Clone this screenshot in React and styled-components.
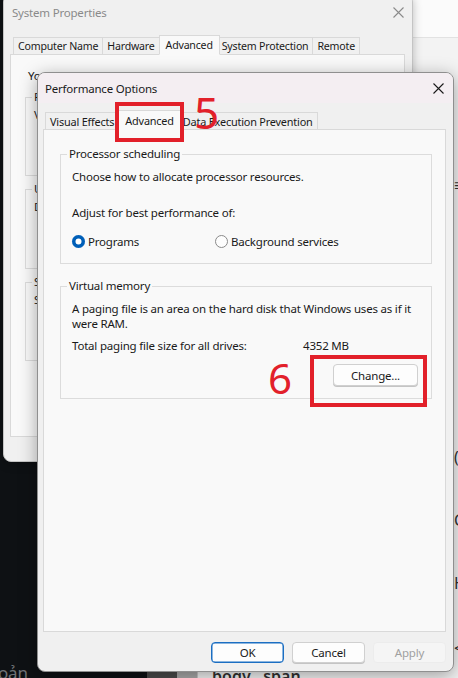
import React from 'react';
import styled, { createGlobalStyle } from 'styled-components';

const FONT = `"Noto Sans", "Segoe UI", Arial, sans-serif`;

const Global = createGlobalStyle`
  html, body { margin: 0; padding: 0; }
  body {
    width: 458px; height: 678px; overflow: hidden;
    background: #0e1114;
    font-family: ${FONT};
    font-size: 11.5px;
    letter-spacing: -0.2px;
    color: #1a1a1a;
  }
  * { box-sizing: border-box; }
`;

const Desktop = styled.div`
  position: relative;
  width: 458px;
  height: 678px;
  overflow: hidden;
  background: #0e1114;
`;

/* ---------- background application (behind windows) ---------- */
const BackApp = styled.div`
  position: absolute;
  left: 197px; top: 0; right: 0; bottom: 0;
  display: flex;
  flex-direction: column;
  background: #f3f3f3;
  border-left: 1px solid #c9c9c9;
`;
const BackHeader = styled.div`
  height: 38px;
  background: #fbfbfb;
  border-bottom: 1px solid #e2e2e2;
`;
const BackBody = styled.div`
  flex: 1;
  display: flex;
  justify-content: space-between;
`;
const BackFoot = styled.div`
  align-self: flex-end;
  margin: 0 0 -9px 14px;
  font: 600 16px ${FONT};
  letter-spacing: 0;
  color: #333;
`;
const BackGlyphs = styled.div`
  display: flex;
  flex-direction: column;
  padding-top: 136px;
  margin-right: -7px;
  font: 16px/22px ${FONT};
  color: #333;
  width: 11px;
`;
const Glyph = styled.span`
  margin-top: ${p => p.$mt}px;
`;
const TaskStub = styled.div`
  position: absolute;
  left: 147px; bottom: 0;
  width: 50px; height: 6px;
  display: flex;
`;
const StubPart = styled.div`
  flex: ${p => p.$w};
  background: ${p => p.$c};
`;
const CornerText = styled.div`
  position: absolute;
  left: -2px; bottom: -6px;
  font: 17px ${FONT};
  color: #6e7276;
`;

/* ---------- generic window pieces ---------- */
const Win = styled.div`
  position: absolute;
  display: flex;
  flex-direction: column;
  background: #f0f0f0;
  border: 1px solid ${p => (p.$active ? '#8f8f8f' : '#c4c4c4')};
  border-radius: 8px;
  box-shadow: ${p => (p.$active ? '0 4px 18px rgba(0,0,0,0.35)' : '0 2px 10px rgba(0,0,0,0.25)')};
  overflow: hidden;
`;
const TitleBar = styled.div`
  display: flex;
  align-items: center;
  justify-content: space-between;
  height: ${p => p.$h}px;
  padding: 0 ${p => p.$pr}px 0 ${p => p.$pl}px;
  background: ${p => (p.$active ? '#f4eef2' : '#f0f0f0')};
  color: ${p => (p.$active ? '#1a1a1a' : '#8a8a8a')};
  flex-shrink: 0;
`;
const CloseIcon = ({ color }) => (
  <svg width="11" height="11" viewBox="0 0 11 11">
    <path d="M0.5 0.5 L10.5 10.5 M10.5 0.5 L0.5 10.5" stroke={color} strokeWidth="1.1" fill="none" />
  </svg>
);

const WinBody = styled.div`
  flex: 1;
  display: flex;
  flex-direction: column;
  padding: ${p => p.$pad};
`;
const TabRow = styled.div`
  display: flex;
  align-items: flex-end;
  padding-left: ${p => p.$pl}px;
  height: 20px;
  flex-shrink: 0;
  font-size: ${p => p.$fs}px;
`;
const Tab = styled.div`
  height: ${p => (p.$sel ? 20 : 18)}px;
  padding: 0 ${p => (p.$sel ? 6 : 4)}px;
  margin: 0 ${p => (p.$sel ? -2 : 0)}px -1px;
  display: flex;
  align-items: center;
  border: 1px solid #d9d9d9;
  border-bottom: ${p => (p.$sel ? '1px solid #f9f9f9' : '1px solid #d9d9d9')};
  background: ${p => (p.$sel ? '#f9f9f9' : '#f0f0f0')};
  position: relative;
  z-index: ${p => (p.$sel ? 2 : 1)};
  white-space: nowrap;
  & + & { margin-left: ${p => (p.$sel ? -1 : 2)}px; }
`;
const TabPanel = styled.div`
  flex: ${p => (p.$grow ? 1 : 'none')};
  height: ${p => (p.$h ? `${p.$h}px` : 'auto')};
  border: 1px solid #d9d9d9;
  background: #f9f9f9;
  padding: ${p => p.$pad};
  display: flex;
  flex-direction: column;
  position: relative;
  z-index: 1;
`;
const Group = styled.fieldset`
  margin: ${p => p.$mt || 0}px 0 0;
  border: 1px solid #dcdcdc;
  padding: ${p => p.$pad};
  min-width: 0;
  height: ${p => (p.$h ? `${p.$h}px` : 'auto')};
`;
const Legend = styled.legend`
  padding: 0 2px;
  margin-left: ${p => (p.$ml !== undefined ? p.$ml : -5)}px;
  line-height: 16px;
`;
const Line = styled.div`
  line-height: 15px;
  margin-top: ${p => p.$mt || 0}px;
  white-space: ${p => (p.$nowrap ? 'nowrap' : 'normal')};
`;
const RadioRow = styled.div`
  display: grid;
  grid-template-columns: 143px auto;
  margin-top: 13px;
  height: 16px;
  align-items: center;
`;
const RadioItem = styled.label`
  display: flex;
  align-items: center;
  gap: 3px;
  line-height: 15px;
`;
const RadioDot = styled.span`
  width: 13px; height: 13px;
  border-radius: 50%;
  flex-shrink: 0;
  ${p => p.$on
    ? 'background: #005fb8; border: none; box-shadow: inset 0 0 0 3.5px #005fb8, inset 0 0 0 13px #fff;'
    : 'background: #fdfdfd; border: 1px solid #8a8a8a;'}
`;
const DataRow = styled.div`
  display: grid;
  grid-template-columns: 231px auto;
  line-height: 15px;
  margin-top: 7px;
`;
const ButtonRow = styled.div`
  display: flex;
  justify-content: flex-end;
  gap: ${p => p.$gap}px;
  margin-top: ${p => p.$mt}px;
`;
const Button = styled.div`
  width: ${p => p.$w}px;
  height: ${p => p.$h}px;
  display: flex;
  align-items: center;
  justify-content: center;
  border-radius: 4px;
  background: ${p => (p.$disabled ? '#f5f5f5' : '#fdfdfd')};
  color: ${p => (p.$disabled ? '#a0a0a0' : '#1a1a1a')};
  border: 1px solid ${p => (p.$primary ? '#1b6ec2' : p.$disabled ? '#ececec' : '#d0d0d0')};
  box-shadow: ${p => (p.$primary ? 'inset 0 0 0 0.5px #1b6ec2' : p.$disabled ? 'none' : '0 1px 0 #c4c4c4')};
`;
const ChangeWrap = styled.div`
  display: flex;
  justify-content: flex-end;
  margin-top: 11px;
`;

/* ---------- system properties specifics ---------- */
const SysText = styled.div`
  line-height: 15px;
  white-space: nowrap;
  margin-bottom: 6px;
  padding-left: 3px;
`;
const SysGroupInner = styled.div`
  display: flex;
  flex-direction: column;
  justify-content: space-between;
  height: 100%;
`;

/* ---------- annotations ---------- */
const Mark = styled.div`
  position: absolute;
  left: ${p => p.$x}px; top: ${p => p.$y}px;
  width: ${p => p.$w}px; height: ${p => p.$h}px;
  border: 4px solid #e2202a;
  z-index: 20;
`;
const Num = styled.div`
  position: absolute;
  left: ${p => p.$x}px; top: ${p => p.$y}px;
  font: 400 ${p => p.$s}px/1 ${FONT};
  letter-spacing: 0;
  color: #e2202a;
  z-index: 20;
`;

export default function App() {
  return (
    <>
      <Global />
      <Desktop>
        <BackApp>
          <BackHeader />
          <BackBody>
            <BackFoot>bogy&nbsp;&nbsp;&nbsp;span</BackFoot>
            <BackGlyphs>
              <Glyph $mt={0}>≡</Glyph>
              <Glyph $mt={250}>(</Glyph>
              <Glyph $mt={41}>C</Glyph>
              <Glyph $mt={41}>H</Glyph>
              <Glyph $mt={43}>&lt;</Glyph>
            </BackGlyphs>
          </BackBody>
        </BackApp>
        <TaskStub>
          <StubPart $w={30} $c="#4a4a4a" />
          <StubPart $w={20} $c="#a9a9a9" />
        </TaskStub>
        <CornerText>oản</CornerText>

        {/* System Properties (inactive) */}
        <Win style={{ left: 3, top: -6, width: 410, height: 468 }}>
          <TitleBar $h={35} $pl={8} $pr={8}>
            <span>System Properties</span>
            <CloseIcon color="#8a8a8a" />
          </TitleBar>
          <WinBody $pad="4px 7px 0 6px">
            <TabRow $pl={3} $fs={10.6}>
              <Tab>Computer Name</Tab>
              <Tab>Hardware</Tab>
              <Tab $sel>Advanced</Tab>
              <Tab>System Protection</Tab>
              <Tab>Remote</Tab>
            </TabRow>
            <TabPanel $h={383} $pad="13px 12px 0 14px">
              <SysText>
                You must be logged on as an Administrator to make most of these changes.
              </SysText>
              <Group $pad="2px 8px 8px 8px" $h={87}>
                <Legend $ml={-2}>Performance</Legend>
                <SysGroupInner>
                  <Line $nowrap>Visual effects, processor scheduling, memory usage, and virtual memory</Line>
                  <ButtonRow $gap={0} $mt={0}><Button $w={75} $h={22}>Settings...</Button></ButtonRow>
                </SysGroupInner>
              </Group>
              <Group $pad="2px 8px 8px 8px" $h={88} $mt={5}>
                <Legend $ml={-2}>User Profiles</Legend>
                <SysGroupInner>
                  <Line $nowrap>Desktop settings related to your sign-in</Line>
                  <ButtonRow $gap={0} $mt={0}><Button $w={75} $h={22}>Settings...</Button></ButtonRow>
                </SysGroupInner>
              </Group>
              <Group $pad="2px 8px 8px 8px" $h={87} $mt={5}>
                <Legend $ml={-2}>Startup and Recovery</Legend>
                <SysGroupInner>
                  <Line $nowrap>System startup, system failure, and debugging information</Line>
                  <ButtonRow $gap={0} $mt={0}><Button $w={75} $h={22}>Settings...</Button></ButtonRow>
                </SysGroupInner>
              </Group>
              <ButtonRow $gap={0} $mt={12}><Button $w={150} $h={22}>Environment Variables...</Button></ButtonRow>
            </TabPanel>
            <ButtonRow $gap={8} $mt={6}>
              <Button $w={73} $h={21}>OK</Button>
              <Button $w={73} $h={21}>Cancel</Button>
              <Button $w={73} $h={21}>Apply</Button>
            </ButtonRow>
          </WinBody>
        </Win>

        {/* Performance Options (active) */}
        <Win $active style={{ left: 37, top: 72, width: 417, height: 600, zIndex: 5 }}>
          <TitleBar $active $h={30} $pl={7} $pr={9}>
            <span>Performance Options</span>
            <CloseIcon color="#1a1a1a" />
          </TitleBar>
          <WinBody $pad="6px 7px 8px 5px">
            <TabRow $pl={2} $fs={10.9}>
              <Tab>Visual Effects</Tab>
              <Tab $sel>Advanced</Tab>
              <Tab>Data Execution Prevention</Tab>
            </TabRow>
            <TabPanel $grow $pad="16px 13px 0 16px">
              <Group $pad="7px 11px 14px 11px">
                <Legend>Processor scheduling</Legend>
                <Line>Choose how to allocate processor resources.</Line>
                <Line $mt={21}>Adjust for best performance of:</Line>
                <RadioRow>
                  <RadioItem><RadioDot $on />Programs</RadioItem>
                  <RadioItem><RadioDot />Background services</RadioItem>
                </RadioRow>
              </Group>
              <Group $pad="7px 13px 12px 11px" $mt={14}>
                <Legend>Virtual memory</Legend>
                <Line>A paging file is an area on the hard disk that Windows uses as if it were RAM.</Line>
                <DataRow>
                  <span>Total paging file size for all drives:</span>
                  <span>4352 MB</span>
                </DataRow>
                <ChangeWrap><Button $w={85} $h={22}>Change...</Button></ChangeWrap>
              </Group>
            </TabPanel>
            <ButtonRow $gap={8} $mt={10}>
              <Button $primary $w={73} $h={21}>OK</Button>
              <Button $w={73} $h={21}>Cancel</Button>
              <Button $disabled $w={73} $h={21}>Apply</Button>
            </ButtonRow>
          </WinBody>
        </Win>

        <Mark $x={115} $y={102} $w={69} $h={40} />
        <Num $x={194} $y={90} $s={44}>5</Num>
        <Mark $x={310} $y={355} $w={117} $h={52} />
        <Num $x={268} $y={357} $s={42}>6</Num>
      </Desktop>
    </>
  );
}
